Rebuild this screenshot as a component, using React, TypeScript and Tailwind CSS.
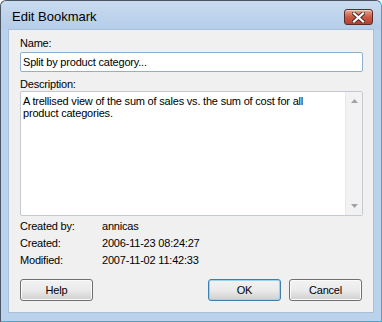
// Win7-style "Edit Bookmark" dialog.

const font = { fontFamily: '"Liberation Sans", Arial, sans-serif' };

function CloseButton() {
  return (
    <div className="w-[29px] h-[16px] rounded-[3px] border border-[#5a2a24] bg-gradient-to-b from-[#e8a593] via-[#c95a45] to-[#b6402d] flex items-center justify-center shadow-[inset_0_1px_0_rgba(255,255,255,0.5)]">
      <svg width="13" height="11" viewBox="0 0 13 11">
        <path d="M2 1.5 L11 9.5 M11 1.5 L2 9.5" stroke="#4a2a26" strokeWidth="4" strokeLinecap="square" />
        <path d="M2 1.5 L11 9.5 M11 1.5 L2 9.5" stroke="#ffffff" strokeWidth="2.2" strokeLinecap="square" />
      </svg>
    </div>
  );
}

function Btn({ label, primary }: { label: string; primary?: boolean }) {
  return (
    <div
      className={`w-[73px] h-[22px] rounded-[3px] border flex items-center justify-center text-[11px] text-black bg-gradient-to-b from-[#f2f2f2] via-[#ebebeb] to-[#cfcfcf] ${
        primary ? 'border-[#3c7fb1] shadow-[inset_0_0_0_1px_#9ad2f2]' : 'border-[#707070] shadow-[inset_0_0_0_1px_#fbfbfb]'
      }`}
    >
      {label}
    </div>
  );
}

function Arrow({ up }: { up?: boolean }) {
  return (
    <svg width="7" height="4" viewBox="0 0 7 4">
      <path d={up ? 'M0 4 L3.5 0 L7 4 Z' : 'M0 0 L7 0 L3.5 4 Z'} fill="#a3a3a3" />
    </svg>
  );
}

export default function App() {
  return (
    <div
      style={font}
      className="w-[382px] h-[322px] rounded-t-[6px] border border-t-[#4b5563] border-l-[#4b5563] border-r-[#22b8d4] border-b-[#22b8d4] bg-[#bad2ec] flex flex-col overflow-hidden"
    >
      {/* title bar */}
      <div className="h-[28px] flex items-start justify-between pl-[11px] pr-[8px] bg-gradient-to-b from-[#c9dbef] to-[#b5cde9] rounded-t-[5px]">
        <span className="text-[13px] text-black mt-[8px] leading-[15px]">Edit Bookmark</span>
        <div className="mt-[8px]">
          <CloseButton />
        </div>
      </div>

      {/* client area */}
      <div className="ml-[7px] mr-[7px] h-[284px] bg-[#f0f0f0] border border-[#a9bfd6] flex flex-col pl-[11px] pr-[10px] pt-[7px] text-[11px] tracking-[-0.2px] text-black">
        <div className="leading-[13px]">Name:</div>
        <div className="mt-[2px] h-[20px] rounded-[2px] border border-[#8fb0cf] bg-white flex items-center px-[2px]">
          Split by product category...
        </div>
        <div className="mt-[6px] leading-[13px]">Description:</div>
        <div className="h-[125px] rounded-[2px] border border-[#c5c9d0] bg-white flex">
          <div className="flex-1 pl-[2px] pr-[30px] pt-[3px] leading-[12px]">
            A trellised view of the sum of sales vs. the sum of cost for all product categories.
          </div>
          <div className="w-[17px] bg-[#f2f2f2] border-l border-[#e8e8e8] flex flex-col items-center justify-between py-[7px]">
            <Arrow up />
            <Arrow />
          </div>
        </div>

        <div className="mt-[2px] flex flex-col">
          {[
            ['Created by:', 'annicas'],
            ['Created:', '2006-11-23 08:24:27'],
            ['Modified:', '2007-11-02 11:42:33'],
          ].map(([k, v]) => (
            <div key={k} className="h-[17px] flex items-center">
              <span className="w-[82px]">{k}</span>
              <span>{v}</span>
            </div>
          ))}
        </div>

        <div className="mt-[10px] flex items-center pr-[1px]">
          <Btn label="Help" />
          <div className="flex-1" />
          <Btn label="OK" primary />
          <div className="w-[8px]" />
          <Btn label="Cancel" />
        </div>
      </div>
    </div>
  );
}
